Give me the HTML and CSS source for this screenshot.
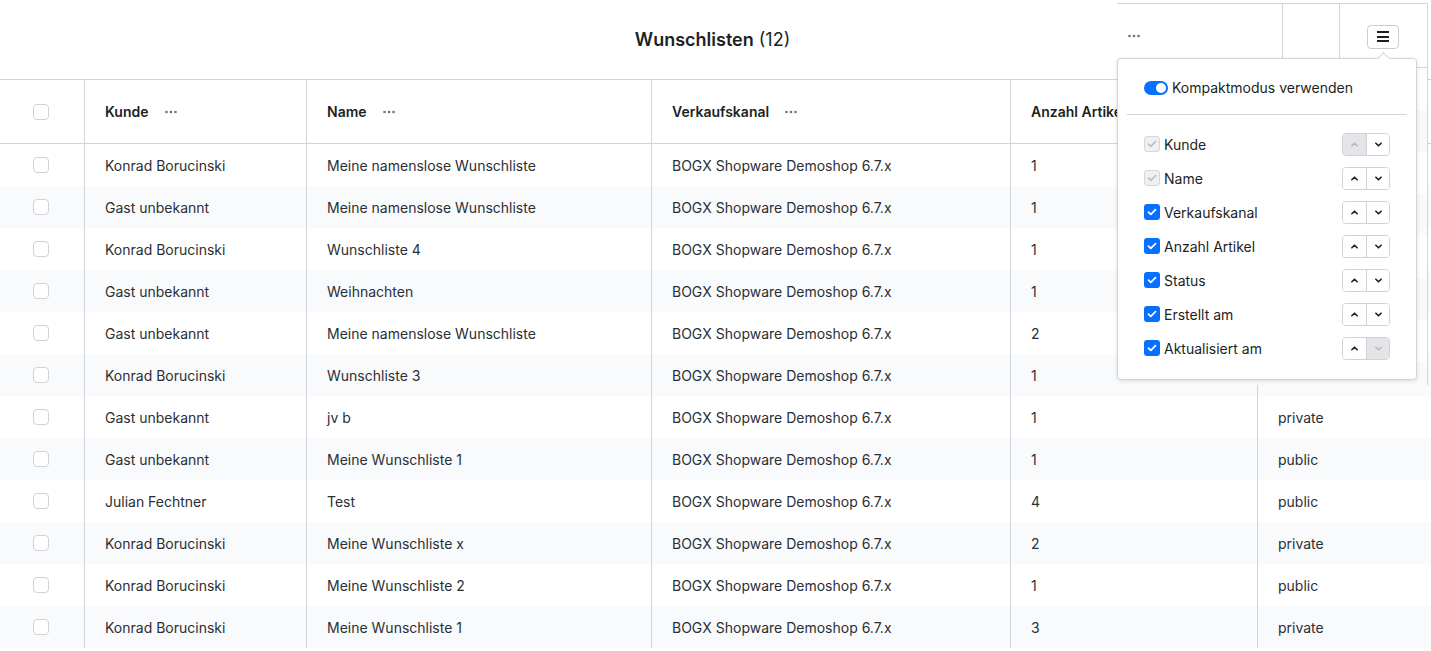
FILE: index.html
```html
<!DOCTYPE html>
<html lang="de">
<head>
    <meta charset="UTF-8">
    <meta name="viewport" content="width=device-width, initial-scale=1.0">
    <title>Wunschlisten</title>
    <link rel="stylesheet" href="styles.css">
</head>
<body>
    <div class="page">
        <div class="title-bar">
            <h1><strong>Wunschlisten</strong> (12)</h1>
        </div>

        <div class="grid">
            <div class="row head">
                <div class="cell check"><span class="box"></span></div>
                <div class="cell">Kunde <svg class="dots" viewBox="0 0 12 4"><circle cx="1.5" cy="2" r="1.3"/><circle cx="6" cy="2" r="1.3"/><circle cx="10.5" cy="2" r="1.3"/></svg></div>
                <div class="cell">Name <svg class="dots" viewBox="0 0 12 4"><circle cx="1.5" cy="2" r="1.3"/><circle cx="6" cy="2" r="1.3"/><circle cx="10.5" cy="2" r="1.3"/></svg></div>
                <div class="cell">Verkaufskanal <svg class="dots" viewBox="0 0 12 4"><circle cx="1.5" cy="2" r="1.3"/><circle cx="6" cy="2" r="1.3"/><circle cx="10.5" cy="2" r="1.3"/></svg></div>
                <div class="cell">Anzahl Artikel <svg class="dots" viewBox="0 0 12 4"><circle cx="1.5" cy="2" r="1.3"/><circle cx="6" cy="2" r="1.3"/><circle cx="10.5" cy="2" r="1.3"/></svg></div>
                <div class="cell">Status</div>
            </div>

            <div class="row"><div class="cell check"><span class="box"></span></div><div class="cell">Konrad Borucinski</div><div class="cell">Meine namenslose Wunschliste</div><div class="cell">BOGX Shopware Demoshop 6.7.x</div><div class="cell">1</div><div class="cell">private</div></div>
            <div class="row"><div class="cell check"><span class="box"></span></div><div class="cell">Gast unbekannt</div><div class="cell">Meine namenslose Wunschliste</div><div class="cell">BOGX Shopware Demoshop 6.7.x</div><div class="cell">1</div><div class="cell">private</div></div>
            <div class="row"><div class="cell check"><span class="box"></span></div><div class="cell">Konrad Borucinski</div><div class="cell">Wunschliste 4</div><div class="cell">BOGX Shopware Demoshop 6.7.x</div><div class="cell">1</div><div class="cell">public</div></div>
            <div class="row"><div class="cell check"><span class="box"></span></div><div class="cell">Gast unbekannt</div><div class="cell">Weihnachten</div><div class="cell">BOGX Shopware Demoshop 6.7.x</div><div class="cell">1</div><div class="cell">private</div></div>
            <div class="row"><div class="cell check"><span class="box"></span></div><div class="cell">Gast unbekannt</div><div class="cell">Meine namenslose Wunschliste</div><div class="cell">BOGX Shopware Demoshop 6.7.x</div><div class="cell">2</div><div class="cell">private</div></div>
            <div class="row"><div class="cell check"><span class="box"></span></div><div class="cell">Konrad Borucinski</div><div class="cell">Wunschliste 3</div><div class="cell">BOGX Shopware Demoshop 6.7.x</div><div class="cell">1</div><div class="cell">public</div></div>
            <div class="row"><div class="cell check"><span class="box"></span></div><div class="cell">Gast unbekannt</div><div class="cell">jv b</div><div class="cell">BOGX Shopware Demoshop 6.7.x</div><div class="cell">1</div><div class="cell">private</div></div>
            <div class="row"><div class="cell check"><span class="box"></span></div><div class="cell">Gast unbekannt</div><div class="cell">Meine Wunschliste 1</div><div class="cell">BOGX Shopware Demoshop 6.7.x</div><div class="cell">1</div><div class="cell">public</div></div>
            <div class="row"><div class="cell check"><span class="box"></span></div><div class="cell">Julian Fechtner</div><div class="cell">Test</div><div class="cell">BOGX Shopware Demoshop 6.7.x</div><div class="cell">4</div><div class="cell">public</div></div>
            <div class="row"><div class="cell check"><span class="box"></span></div><div class="cell">Konrad Borucinski</div><div class="cell">Meine Wunschliste x</div><div class="cell">BOGX Shopware Demoshop 6.7.x</div><div class="cell">2</div><div class="cell">private</div></div>
            <div class="row"><div class="cell check"><span class="box"></span></div><div class="cell">Konrad Borucinski</div><div class="cell">Meine Wunschliste 2</div><div class="cell">BOGX Shopware Demoshop 6.7.x</div><div class="cell">1</div><div class="cell">public</div></div>
            <div class="row"><div class="cell check"><span class="box"></span></div><div class="cell">Konrad Borucinski</div><div class="cell">Meine Wunschliste 1</div><div class="cell">BOGX Shopware Demoshop 6.7.x</div><div class="cell">3</div><div class="cell">private</div></div>
        </div>

        <!-- sticky header of the scrolled part, shown over the table -->
        <div class="sticky">
            <div class="sticky-head">
                <div class="sh-cell sh-wide"><svg class="dots" viewBox="0 0 12 4"><circle cx="1.5" cy="2" r="1.3"/><circle cx="6" cy="2" r="1.3"/><circle cx="10.5" cy="2" r="1.3"/></svg></div>
                <div class="sh-cell sh-narrow"></div>
                <div class="sh-cell sh-menu">
                    <button class="menu-btn"><span></span><span></span><span></span></button>
                </div>
            </div>
            <div class="sticky-body"></div>
        </div>

        <div class="popover">
            <div class="popover-top">
                <span class="switch"><span class="knob"></span></span>
                Kompaktmodus verwenden
            </div>
            <div class="popover-list">
                <div class="col-item">
                    <label><span class="cb disabled"><svg viewBox="0 0 10 8"><path d="M1.5 4.2 3.8 6.3 8.5 1.7"/></svg></span>Kunde</label>
                    <div class="order"><span class="off"><svg viewBox="0 0 8 5"><path d="M1 4 4 1 7 4"/></svg></span><span><svg viewBox="0 0 8 5"><path d="M1 1 4 4 7 1"/></svg></span></div>
                </div>
                <div class="col-item">
                    <label><span class="cb disabled"><svg viewBox="0 0 10 8"><path d="M1.5 4.2 3.8 6.3 8.5 1.7"/></svg></span>Name</label>
                    <div class="order"><span><svg viewBox="0 0 8 5"><path d="M1 4 4 1 7 4"/></svg></span><span><svg viewBox="0 0 8 5"><path d="M1 1 4 4 7 1"/></svg></span></div>
                </div>
                <div class="col-item">
                    <label><span class="cb"><svg viewBox="0 0 10 8"><path d="M1.5 4.2 3.8 6.3 8.5 1.7"/></svg></span>Verkaufskanal</label>
                    <div class="order"><span><svg viewBox="0 0 8 5"><path d="M1 4 4 1 7 4"/></svg></span><span><svg viewBox="0 0 8 5"><path d="M1 1 4 4 7 1"/></svg></span></div>
                </div>
                <div class="col-item">
                    <label><span class="cb"><svg viewBox="0 0 10 8"><path d="M1.5 4.2 3.8 6.3 8.5 1.7"/></svg></span>Anzahl Artikel</label>
                    <div class="order"><span><svg viewBox="0 0 8 5"><path d="M1 4 4 1 7 4"/></svg></span><span><svg viewBox="0 0 8 5"><path d="M1 1 4 4 7 1"/></svg></span></div>
                </div>
                <div class="col-item">
                    <label><span class="cb"><svg viewBox="0 0 10 8"><path d="M1.5 4.2 3.8 6.3 8.5 1.7"/></svg></span>Status</label>
                    <div class="order"><span><svg viewBox="0 0 8 5"><path d="M1 4 4 1 7 4"/></svg></span><span><svg viewBox="0 0 8 5"><path d="M1 1 4 4 7 1"/></svg></span></div>
                </div>
                <div class="col-item">
                    <label><span class="cb"><svg viewBox="0 0 10 8"><path d="M1.5 4.2 3.8 6.3 8.5 1.7"/></svg></span>Erstellt am</label>
                    <div class="order"><span><svg viewBox="0 0 8 5"><path d="M1 4 4 1 7 4"/></svg></span><span><svg viewBox="0 0 8 5"><path d="M1 1 4 4 7 1"/></svg></span></div>
                </div>
                <div class="col-item">
                    <label><span class="cb"><svg viewBox="0 0 10 8"><path d="M1.5 4.2 3.8 6.3 8.5 1.7"/></svg></span>Aktualisiert am</label>
                    <div class="order"><span><svg viewBox="0 0 8 5"><path d="M1 4 4 1 7 4"/></svg></span><span class="off"><svg viewBox="0 0 8 5"><path d="M1 1 4 4 7 1"/></svg></span></div>
                </div>
            </div>
        </div>
    </div>
</body>
</html>
```

FILE: styles.css
```css
* {
    box-sizing: border-box;
}
body {
    margin: 0;
    font-family: Inter, "Noto Sans", sans-serif;
    font-size: 14px;
    color: #2a2f35;
    background-color: #fff;
    overflow: hidden;
}
.page {
    position: relative;
    width: 1431px;
    height: 651px;
}
.title-bar {
    height: 80px;
    border-bottom: 1px solid #d1d5db;
    display: flex;
    align-items: center;
    justify-content: center;
}
h1 {
    margin: 0 0 0 -6px;
    font-size: 18px;
    font-weight: 400;
    color: #1c1f23;
}
h1 strong {
    font-weight: 600;
}
.row {
    display: grid;
    grid-template-columns: 84px 222px 345px 359px 247px 1fr;
    height: 42px;
}
.row:nth-child(odd) {
    background-color: #f9fafc;
}
.row.head {
    height: 64px;
    border-bottom: 1px solid #d1d5db;
    background-color: #fff;
    font-weight: 600;
    color: #1c1f23;
}
.cell {
    display: flex;
    align-items: center;
    padding-left: 20px;
    border-left: 1px solid #d1d5db;
    white-space: nowrap;
    overflow: hidden;
}
.cell.check {
    border-left: none;
    padding-left: 33px;
}
.box {
    width: 16px;
    height: 16px;
    border: 1px solid #cfd3d9;
    border-radius: 4px;
    background-color: #fff;
}
.dots {
    width: 12px;
    height: 4px;
    margin-left: 16px;
    fill: #6b737c;
}

/* sticky header strip */
.sticky {
    position: absolute;
    left: 1117px;
    top: 3px;
    width: 311px;
    height: 382px;
    display: flex;
    flex-direction: column;
}
.sticky-head {
    height: 65px;
    display: flex;
    background-color: #fff;
    border-top: 1px solid #d1d5db;
    border-right: 1px solid #d1d5db;
    border-bottom: 1px solid #d1d5db;
}
.sticky-body {
    flex: 1;
    border-right: 1px solid #d1d5db;
    background: repeating-linear-gradient(#fff 0 42px, #f9fafc 42px 84px);
}
.sh-cell {
    display: flex;
    align-items: center;
}
.sh-wide {
    width: 166px;
    border-right: 1px solid #d1d5db;
}
.sh-wide .dots {
    margin-left: 11px;
}
.sh-narrow {
    width: 57px;
    border-right: 1px solid #d1d5db;
}
.sh-menu {
    flex: 1;
    padding-left: 27px;
}
.menu-btn {
    width: 32px;
    height: 24px;
    border: 1px solid #c9cdd3;
    border-radius: 4px;
    background-color: #fff;
    display: flex;
    flex-direction: column;
    align-items: center;
    justify-content: center;
    gap: 2.5px;
    padding: 0;
    margin-top: 2px;
}
.menu-btn span {
    width: 12px;
    height: 2px;
    background-color: #1c1f23;
}

/* column settings popover */
.popover {
    position: absolute;
    left: 1117px;
    top: 58px;
    width: 300px;
    height: 322px;
    background-color: #fff;
    border: 1px solid #d1d5db;
    border-radius: 4px;
    box-shadow: 0 1px 4px rgba(0, 0, 0, 0.12);
    color: #1c1f23;
}
.popover::before {
    content: "";
    position: absolute;
    top: -5px;
    left: 261px;
    width: 8px;
    height: 8px;
    background-color: #fff;
    border-left: 1px solid #d1d5db;
    border-top: 1px solid #d1d5db;
    transform: rotate(45deg);
}
.popover-top {
    display: flex;
    align-items: center;
    gap: 4px;
    height: 56px;
    padding: 2px 26px 0 17px;
    margin: 0 9px;
    border-bottom: 1px solid #d1d5db;
    line-height: 20px;
}
.switch {
    width: 24px;
    height: 14px;
    border-radius: 7px;
    background-color: #0870ff;
    position: relative;
}
.knob {
    position: absolute;
    right: 2px;
    top: 2px;
    width: 10px;
    height: 10px;
    border-radius: 50%;
    background-color: #fff;
}
.popover-list {
    padding: 12px 26px 0;
}
.col-item {
    display: flex;
    align-items: center;
    justify-content: space-between;
    height: 34px;
}
.col-item label {
    display: flex;
    align-items: center;
    gap: 4px;
}
.cb {
    width: 16px;
    height: 16px;
    border-radius: 3px;
    background-color: #0870ff;
    display: flex;
    align-items: center;
    justify-content: center;
}
.cb svg {
    width: 10px;
    height: 8px;
    fill: none;
    stroke: #fff;
    stroke-width: 1.8;
    stroke-linecap: round;
    stroke-linejoin: round;
}
.cb.disabled {
    background-color: #eef0f3;
    border: 1px solid #d4d8de;
}
.cb.disabled svg {
    stroke: #bcc1c8;
}
.order {
    display: flex;
    border: 1px solid #cfd3d9;
    border-radius: 4px;
    overflow: hidden;
}
.order span {
    width: 23px;
    height: 21px;
    display: flex;
    align-items: center;
    justify-content: center;
    background-color: #fff;
}
.order span + span {
    border-left: 1px solid #cfd3d9;
}
.order span.off {
    background-color: #e3e5e9;
}
.order svg {
    width: 7px;
    height: 5px;
    fill: none;
    stroke: #1c1f23;
    stroke-width: 1.8;
    stroke-linecap: round;
    stroke-linejoin: round;
}
.order span.off svg {
    stroke: #b3b8bf;
}
```
